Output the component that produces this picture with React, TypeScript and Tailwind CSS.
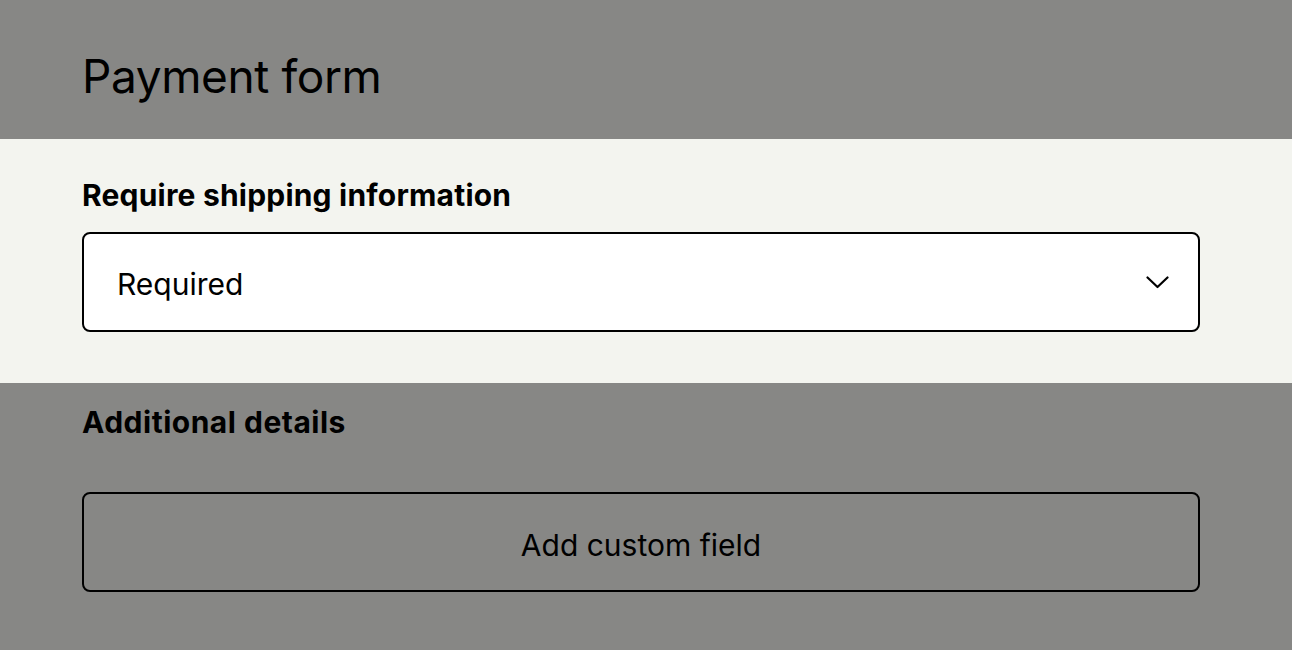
export default function App() {
  return (
    <div className="min-h-[650px] w-full bg-[#878785] text-black font-['Inter',sans-serif]">
      <header className="h-[139px] px-[82px] pt-[46px]">
        <h1 className="text-[46px] leading-[60px] tracking-[-0.4px]">Payment form</h1>
      </header>

      <section className="bg-[#f3f4ef] h-[244px] px-[82px] pt-[34px]">
        <h2 className="text-[30px] leading-[44px] font-bold tracking-[0.2px]">Require shipping information</h2>
        <div className="mt-[15px] w-[1118px] h-[100px] bg-white border-2 border-black rounded-[8px] flex items-center justify-between pl-[33px] pr-[29px]">
          <span className="text-[30px] pt-[5px]">Required</span>
          <svg width="23" height="13" viewBox="0 0 23 13" fill="none" stroke="currentColor" strokeWidth="2.2" strokeLinecap="round" strokeLinejoin="round">
            <path d="M1.5 1.5 L11.5 11 L21.5 1.5" />
          </svg>
        </div>
      </section>

      <section className="px-[82px] pt-[17px]">
        <h2 className="text-[30px] leading-[44px] font-bold tracking-[0.5px]">Additional details</h2>
        <button
          type="button"
          className="mt-[48px] w-[1118px] h-[100px] border-2 border-black rounded-[8px] flex items-center justify-center text-[30px] pt-[6px]"
        >
          Add custom field
        </button>
      </section>
    </div>
  )
}
